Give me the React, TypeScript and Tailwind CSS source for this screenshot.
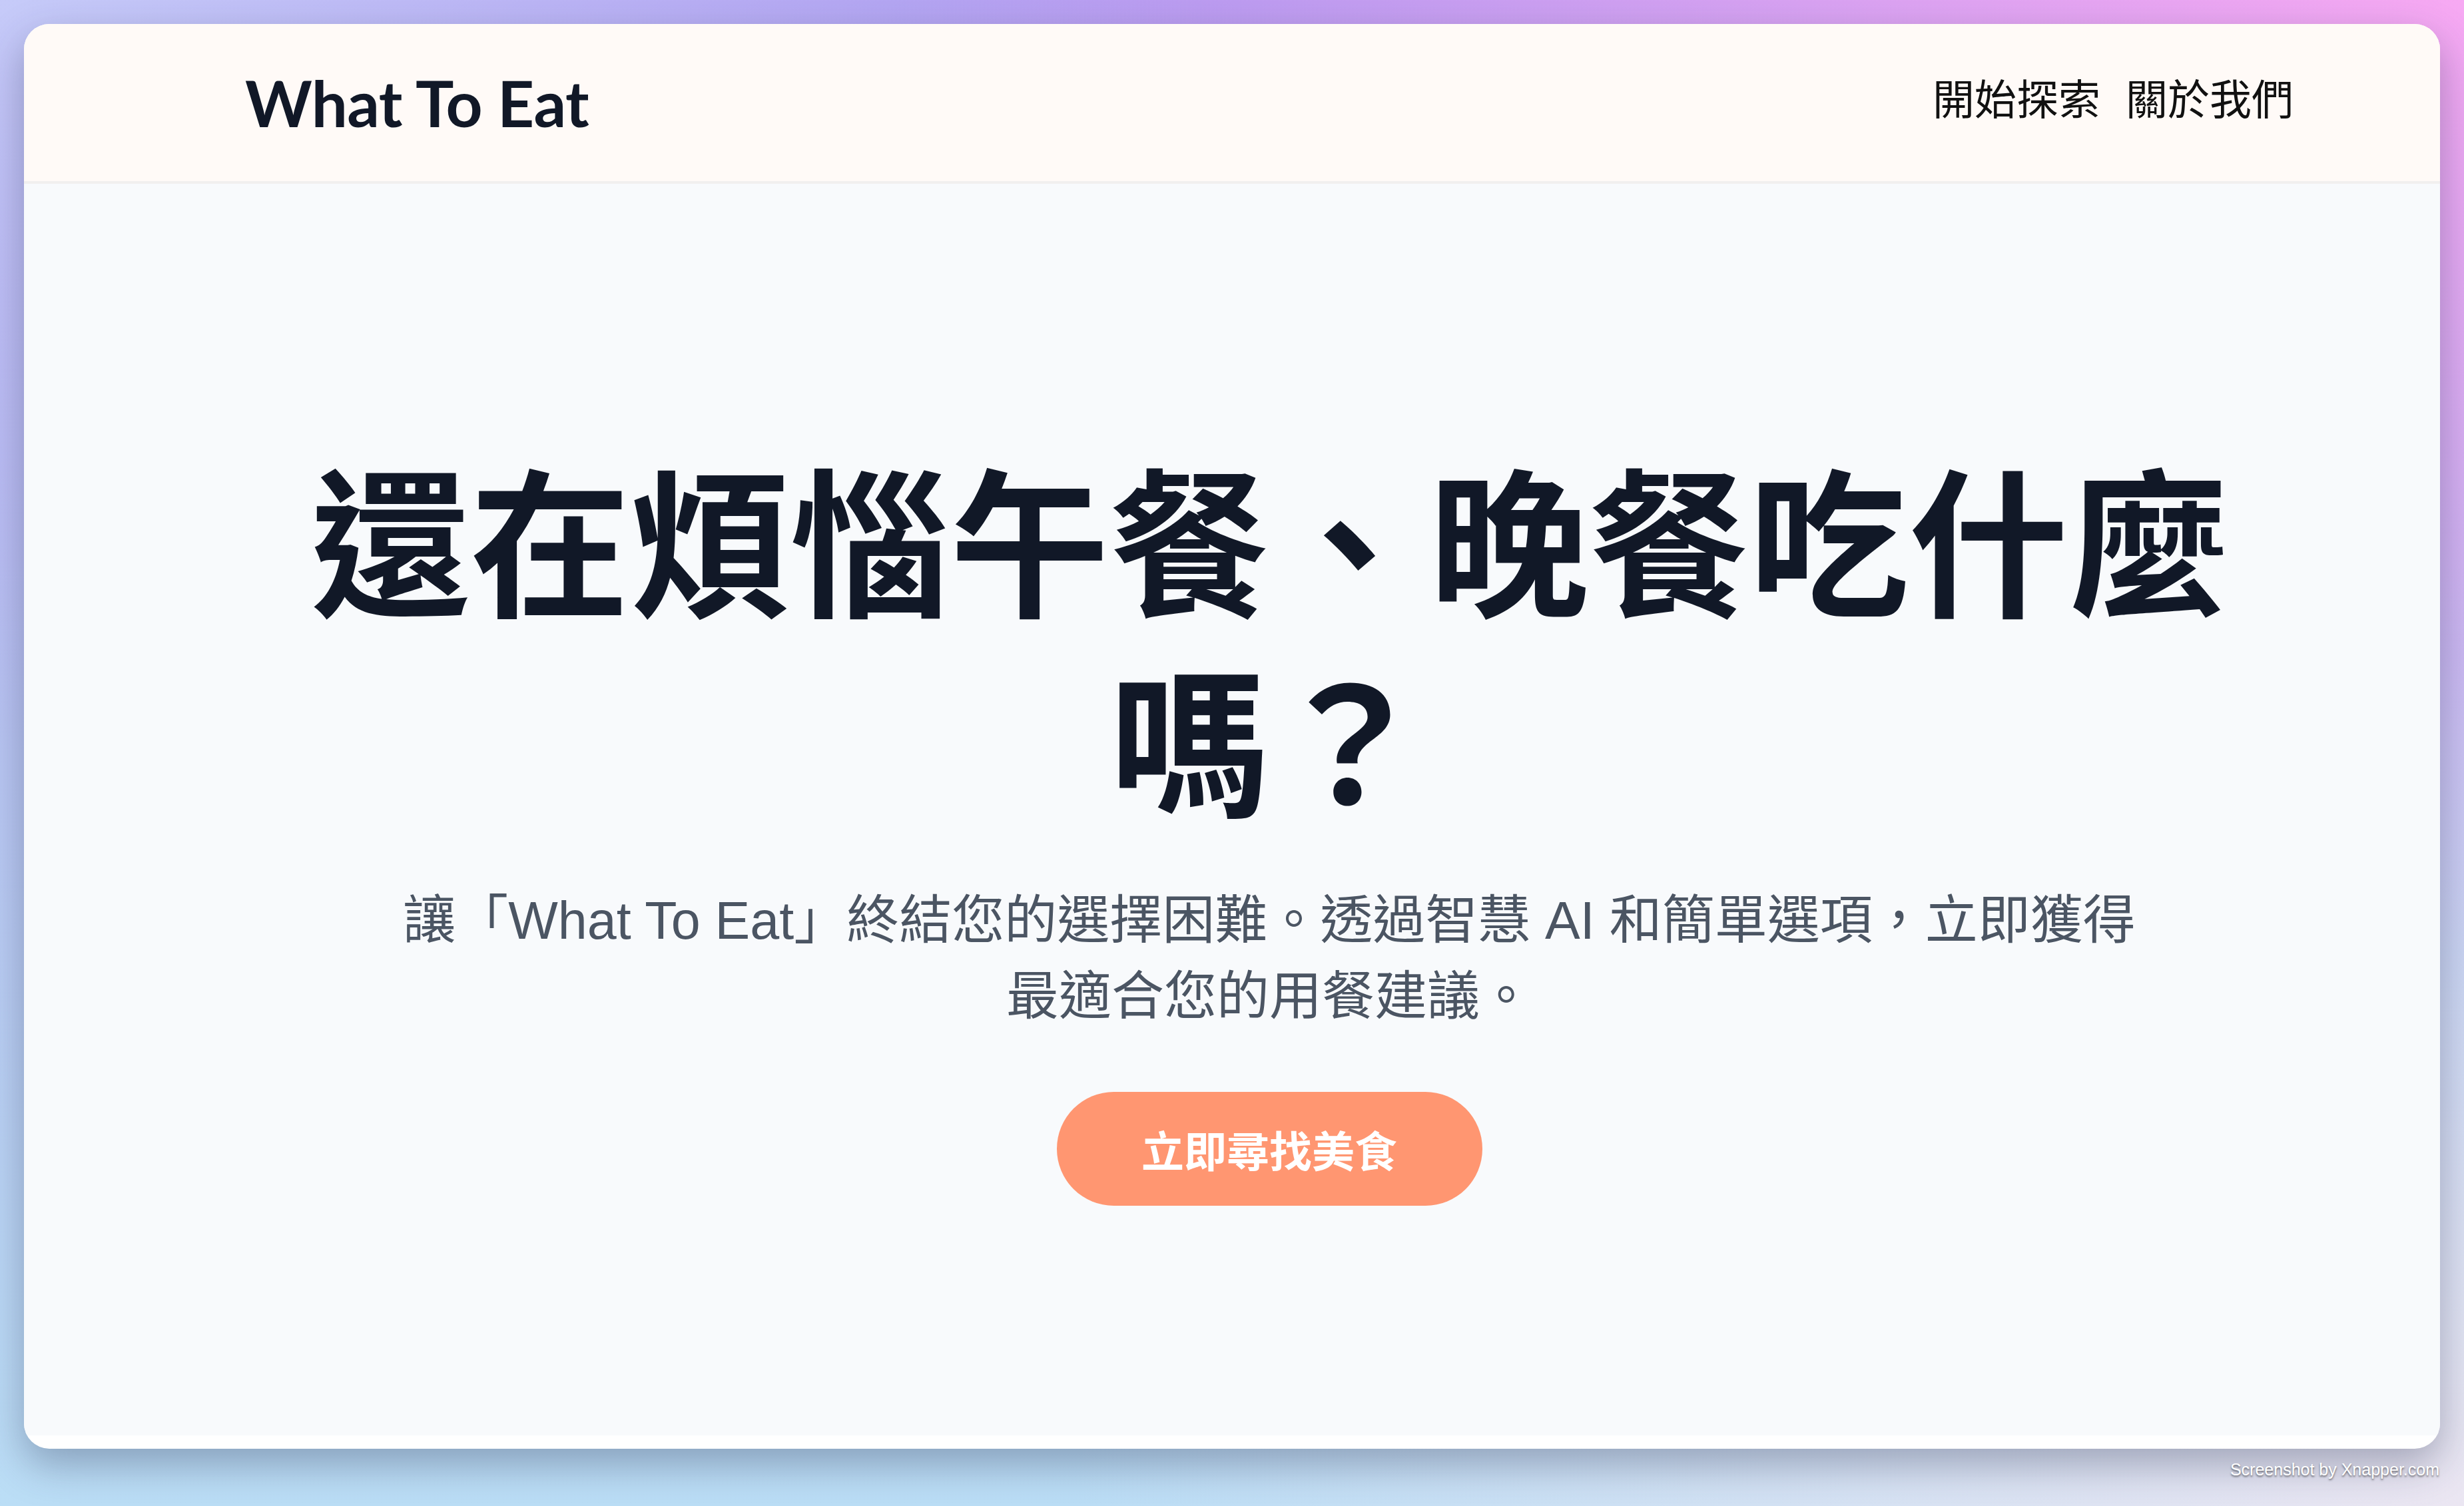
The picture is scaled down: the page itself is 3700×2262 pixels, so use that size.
import React from "react";

const navLinks = ["開始探索", "關於我們"];

export default function App() {
  return (
    <div className="relative w-[3700px] h-[2262px] overflow-hidden pt-[36px] px-[36px] bg-[radial-gradient(ellipse_at_top_right,#f7a9f3_0%,transparent_45%),radial-gradient(ellipse_at_bottom_right,#ebe6f2_0%,transparent_40%),radial-gradient(ellipse_at_top_left,#c6cbf9_0%,transparent_35%),linear-gradient(180deg,#ad98f0_0%,#b9c6f3_50%,#bbdef6_100%)] font-['Inter','Noto_Sans_CJK_TC',sans-serif]">
      {/* window */}
      <div className="w-[3628px] h-[2140px] rounded-[38px] overflow-hidden bg-white flex flex-col shadow-[0_24px_60px_rgba(40,50,80,0.35)]">
        {/* header */}
        <header className="h-[240px] shrink-0 bg-[#fffaf7] border-b-[4px] border-[#f1f0ef] flex items-center justify-between pl-[332px] pr-[220px]">
          <div className="font-['Lato',sans-serif] font-bold text-[96px] text-[#111827] tracking-[-0.5px]">
            What To Eat
          </div>
          <nav className="flex items-center gap-[38px] pb-[18px]">
            {navLinks.map((l) => (
              <a key={l} className="font-['Noto_Sans_CJK_TC',sans-serif] text-[63px] text-[#111111]">
                {l}
              </a>
            ))}
          </nav>
        </header>

        {/* hero */}
        <main className="h-[1880px] shrink-0 bg-[#f8fafc] flex flex-col items-center justify-center pl-[112px] pt-[32px]">
          <h1 className="max-w-[3000px] text-center font-['Noto_Sans_CJK_TC',sans-serif] font-bold text-[240px] leading-[300px] text-[#111827]">
            還在煩惱午餐、晚餐吃什麼嗎？
          </h1>
          <p className="mt-[72px] max-w-[2610px] text-center font-['Liberation_Sans','Noto_Sans_CJK_TC',sans-serif] text-[79px] leading-[114px] text-[#4b5563]">
            讓「What To Eat」終結您的選擇困難。透過智慧 AI 和簡單選項，立即獲得最適合您的用餐建議。
          </p>
          <button className="mt-[86px] w-[639px] h-[171px] rounded-full bg-[#ff9671] text-white font-['Noto_Sans_CJK_TC',sans-serif] font-bold text-[64px]">
            立即尋找美食
          </button>
        </main>
      </div>

      {/* watermark */}
      <div className="absolute right-[37px] bottom-[36px] font-['Liberation_Sans',sans-serif] text-[25px] text-white [text-shadow:0_2px_3px_rgba(0,0,0,0.55)]">
        Screenshot by Xnapper.com
      </div>
    </div>
  );
}
